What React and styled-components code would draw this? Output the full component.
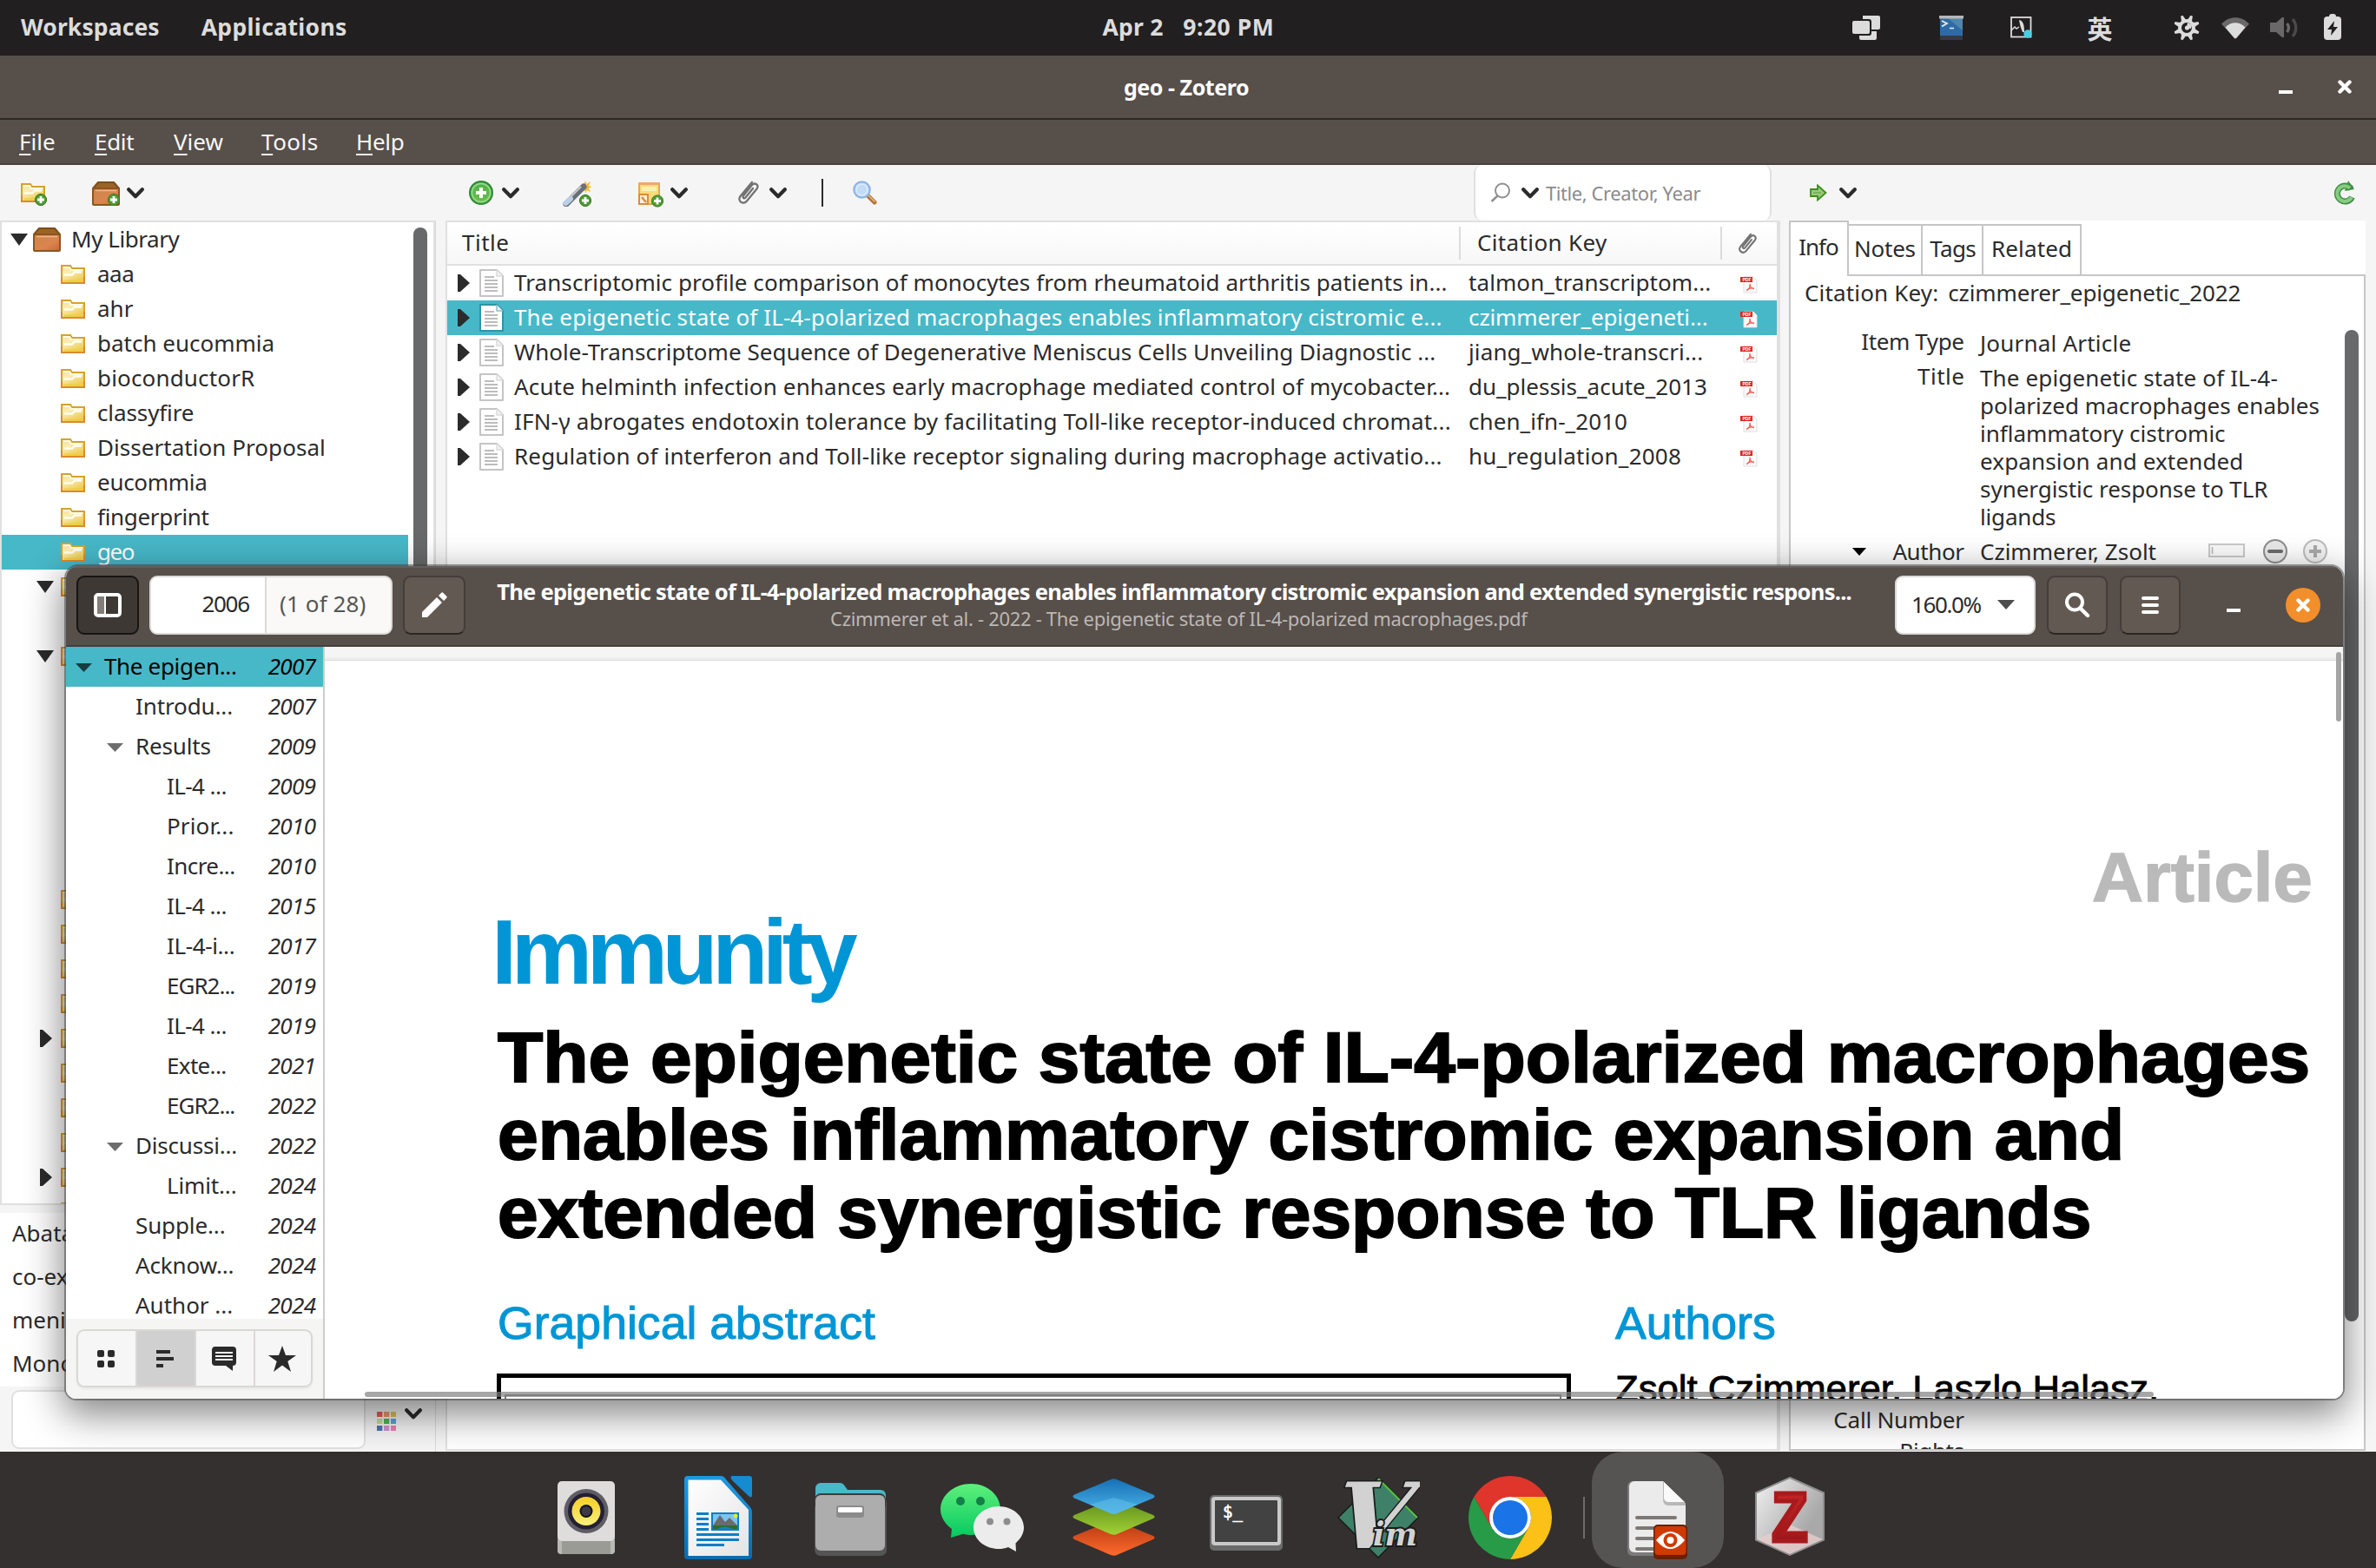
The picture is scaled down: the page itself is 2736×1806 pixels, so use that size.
import React, { useLayoutEffect, useRef, useState } from "react";
import styled, { createGlobalStyle, css } from "styled-components";

const Global = createGlobalStyle`
  *, *::before, *::after { box-sizing: border-box; }
  html, body { margin: 0; padding: 0; }
  body {
    width: 2736px; height: 1806px; overflow: hidden; background: #34302f;
    font-family: "Noto Sans", "Open Sans", "Noto Sans CJK SC", sans-serif;
    font-size: 26px; color: #2b2b2b;
  }
  svg { display: block; flex: none; }
`;

/* ---------- text that is set to a given measure ---------- */
const Tracked = styled.span`
  display: inline-block;
  white-space: nowrap;
  transform-origin: 0 50%;
`;

/* tracks its letters to the measure, or widens them when "stretch" is set */
function Fit({ w, stretch, children, className }) {
  const ref = useRef(null);
  const [style, setStyle] = useState({});
  useLayoutEffect(() => {
    const el = ref.current;
    if (stretch) {
      setStyle({ transform: `scaleX(${w / el.offsetWidth})` });
      return;
    }
    const ls = (w - el.offsetWidth) / (el.textContent.length - 1);
    setStyle({ letterSpacing: ls, marginRight: -ls });
  }, []);
  return (
    <Tracked ref={ref} className={className} style={style}>
      {children}
    </Tracked>
  );
}

/* ---------- desktop ---------- */
const Desktop = styled.div`
  position: relative;
  width: 2736px;
  height: 1806px;
  display: flex;
  flex-direction: column;
  overflow: hidden;
`;

const TopBar = styled.header`
  height: 64px;
  flex: none;
  background: #221f20;
  color: #dcdcdc;
  font-weight: 700;
  font-size: 26.5px;
  display: grid;
  grid-template-columns: 1fr auto 1fr;
  align-items: center;
  padding: 0 40px 0 24px;
`;
const TopLeft = styled.div`
  display: flex;
  gap: 48px;
  padding-bottom: 2px;
`;
const Clock = styled.div`
  display: flex;
  gap: 23px;
  padding-bottom: 2px;
  transform: translateX(8px);
`;
const Tray = styled.div`
  display: flex;
  justify-content: flex-end;
  align-items: center;
`;
const Slot = styled.div`
  display: flex;
  align-items: center;
  flex: none;
  margin-left: ${(p) => p.$ml || 0}px;
  padding-top: ${(p) => p.$pt || 0}px;
  padding-bottom: ${(p) => p.$pb || 0}px;
  width: ${(p) => (p.$w ? p.$w + "px" : "auto")};
`;
const InputMethod = styled.span`
  font: 700 29px/40px "Noto Sans CJK SC", sans-serif;
  width: 28px;
  display: flex;
  justify-content: center;
`;

const ZTitle = styled.div`
  height: 74px;
  flex: none;
  background: #574f4a;
  border-bottom: 2px solid #2b2827;
  color: #fff;
  font-weight: 700;
  font-size: 25px;
  display: flex;
  align-items: center;
  padding-left: 1294px;
`;
const WinControls = styled.div`
  display: flex;
  align-items: center;
  gap: 52px;
  margin-left: auto;
  padding-right: 28px;
`;
const MenuBar = styled.nav`
  height: 52px;
  flex: none;
  background: #574f4a;
  border-bottom: 2px solid #4b403e;
  color: #f7f7f7;
  display: flex;
  align-items: center;
  padding-left: 22px;
`;
const MenuItem = styled.div`
  width: ${(p) => p.$w}px;
  u { text-underline-offset: 4px; text-decoration-thickness: 2px; }
`;

const Toolbar = styled.div`
  height: 64px;
  flex: none;
  background: #f6f5f5;
  display: flex;
  align-items: center;
  padding: 0 24px;
`;
const SearchBox = styled.div`
  height: 64px;
  width: 343px;
  margin-left: ${(p) => p.$ml}px;
  flex: none;
  background: #fff;
  border: 2px solid #e1e0e0;
  border-width: 0 2px;
  border-radius: 9px;
  display: flex;
  align-items: center;
  padding-left: 17px;
  font-size: 22px;
  color: #8b8b8b;
`;
const Rule = styled.div`
  width: 2px;
  height: 32px;
  flex: none;
  background: #2b2b2b;
  margin-left: ${(p) => p.$ml}px;
`;

const Body = styled.div`
  height: 1418px;
  flex: none;
  background: #f6f5f5;
  display: flex;
`;

/* left column */
const LeftCol = styled.aside`
  width: 502px;
  flex: none;
  display: flex;
  flex-direction: column;
  border-right: 1px solid #d9d9d9;
`;
const TreeBox = styled.div`
  height: 1134px;
  background: #fff;
  border: 2px solid #e0e0e0;
  display: flex;
  overflow: hidden;
`;
const TreeRows = styled.div`
  width: 468px;
  flex: none;
`;
const TreeRow = styled.div`
  height: 40px;
  display: flex;
  align-items: center;
  padding-left: ${(p) => p.$pl || 68}px;
  ${(p) => p.$on && css`background: #47b8c8; color: #fff;`}
`;
const TreeLabel = styled.span`
  margin-left: ${(p) => p.$ml || 14}px;
  padding-bottom: 3px;
`;
const Scrollbar = styled.div`
  width: 16px;
  border-radius: 8px;
  background: #68696b;
  flex: none;
  height: ${(p) => p.$h}px;
  margin: ${(p) => p.$m};
`;
const TagPane = styled.div`
  margin-top: 9px;
  height: 200px;
  background: #fff;
  padding-left: 14px;
  overflow: hidden;
`;
const TagLine = styled.div`
  height: 50px;
  line-height: 47px;
`;
const TagFilter = styled.div`
  height: 75px;
  display: flex;
  padding: 4px 0 0 13px;
`;
const FilterInput = styled.div`
  width: 408px;
  height: 68px;
  border: 2px solid #e1e0e0;
  border-radius: 9px;
  background: #fff;
  flex: none;
`;

/* item list */
const ListPane = styled.main`
  margin-left: 11px;
  width: 1537px;
  height: 1417px;
  flex: none;
  background: #fff;
  border: 2px solid #e0e0e0;
  border-right: 4px solid #e0e0e0;
`;
const HeadRow = styled.div`
  height: 50px;
  background: linear-gradient(#fff, #f7f7f7);
  border-bottom: 2px solid #e0e0e0;
  display: flex;
  align-items: center;
  padding-left: 17px;
`;
const HeadCell = styled.div`
  width: ${(p) => p.$w}px;
  height: 38px;
  padding: 0 0 2px ${(p) => p.$pl || 0}px;
  border-left: ${(p) => (p.$bar ? "2px solid #dcdcdc" : "none")};
  display: flex;
  align-items: center;
`;
const ItemRow = styled.div`
  height: 40px;
  display: flex;
  align-items: center;
  padding-left: 12px;
  ${(p) => p.$on && css`background: #47b8c8; color: #fff;`}
`;
const ItemTitle = styled.div`
  width: 1099px;
  margin-left: 12px;
  padding-bottom: 2px;
`;
const ItemKey = styled.div`
  width: 313px;
  padding-bottom: 2px;
`;

/* right pane */
const RightPane = styled.section`
  margin-left: 10px;
  width: 664px;
  height: 1417px;
  flex: none;
  background: #fff;
  display: flex;
  flex-direction: column;
`;
const Tabs = styled.div`
  height: 64px;
  flex: none;
  display: flex;
  align-items: flex-end;
`;
const Tab = styled.div`
  width: ${(p) => p.$w}px;
  height: ${(p) => (p.$on ? 64 : 60)}px;
  border-top: 2px solid #c6c6c6;
  border-right: 2px solid #c6c6c6;
  border-left: ${(p) => (p.$on ? "2px solid #c6c6c6" : "none")};
  border-bottom: ${(p) => (p.$on ? "none" : "2px solid #c6c6c6")};
  display: flex;
  align-items: center;
  justify-content: center;
  padding: 0 0 ${(p) => (p.$on ? 6 : 4)}px 0;
  flex: none;
`;
const TabRest = styled.div`
  flex: 1;
  border-bottom: 2px solid #c6c6c6;
`;
const TabPanel = styled.div`
  flex: 1;
  min-height: 0;
  border: 2px solid #c6c6c6;
  border-top: none;
  overflow: hidden;
  padding-top: 1px;
`;
const CiteLine = styled.div`
  height: 56px;
  line-height: 36px;
  padding-left: 16px;
  display: flex;
  gap: 11px;
`;
const Columns = styled.div`
  display: flex;
`;
const Fields = styled.div`
  width: 638px;
  flex: none;
`;
const Field = styled.div`
  display: grid;
  grid-template-columns: 200px 1fr;
  column-gap: 18px;
  line-height: ${(p) => p.$lh || 40}px;
  ${(p) => p.$h && css`height: ${p.$h}px;`}
`;
const FieldName = styled.div`
  text-align: right;
  line-height: 36px;
  display: flex;
  align-items: center;
  justify-content: flex-end;
  height: 36px;
`;
const FieldValue = styled.div`
  display: flex;
  flex-direction: ${(p) => (p.$row ? "row" : "column")};
  align-items: flex-start;
`;
const Gap = styled.div`
  height: ${(p) => p.$h}px;
`;

/* ---------- document viewer window ---------- */
const Viewer = styled.div`
  position: absolute;
  left: 76px;
  top: 652px;
  width: 2622px;
  height: 959px;
  border-radius: 14px 14px 12px 12px;
  box-shadow: 0 0 0 2px rgba(60, 62, 60, 0.5), 0 14px 44px 4px rgba(0, 0, 0, 0.48);
`;
const Frame = styled.div`
  height: 100%;
  border-radius: inherit;
  overflow: hidden;
  background: #fff;
  display: flex;
  flex-direction: column;
`;
const HeaderBar = styled.div`
  height: 93px;
  flex: none;
  background: #574f4a;
  border-top: 2px solid #655e58;
  border-bottom: 2px solid #453e3a;
  display: flex;
  align-items: flex-start;
  padding: 9px 26px 0 12px;
`;
const HeaderButton = styled.div`
  width: ${(p) => p.$w || 70}px;
  height: 68px;
  margin-left: ${(p) => p.$ml || 0}px;
  border-radius: 9px;
  border: 2px solid ${(p) => (p.$on ? "#171513" : "#443d39")};
  border-bottom-color: ${(p) => (p.$on ? "#171513" : "#2a2623")};
  background: ${(p) => (p.$on ? "#3d3834" : "#625952")};
  display: flex;
  align-items: center;
  justify-content: center;
  flex: none;
`;
const PageEntry = styled.div`
  width: 280px;
  height: 68px;
  margin-left: 12px;
  background: #faf9f8;
  border: 2px solid #dcdad8;
  border-radius: 9px;
  display: flex;
  overflow: hidden;
  flex: none;
`;
const PageNumber = styled.div`
  width: 133px;
  background: #fff;
  border-right: 2px solid #dcdad8;
  display: flex;
  align-items: center;
  justify-content: flex-end;
  padding: 0 17px 4px 0;
`;
const PageCount = styled.div`
  display: flex;
  align-items: center;
  padding: 0 0 4px 15px;
  color: #575553;
`;
const TitleBlock = styled.div`
  width: 1561px;
  margin-left: 36px;
  display: flex;
  flex-direction: column;
  align-items: center;
  color: #fff;
  flex: none;
`;
const DocTitle = styled.div`
  font-weight: 700;
  font-size: 25.5px;
  line-height: 36px;
`;
const DocFile = styled.div`
  font-size: 22px;
  line-height: 27px;
  color: #bcb8b5;
  padding-left: 10px;
`;
const ZoomBox = styled.div`
  width: 162px;
  height: 68px;
  margin-left: 49px;
  border-radius: 9px;
  background: #fff;
  border: 2px solid #dcdad8;
  display: flex;
  align-items: center;
  padding: 0 0 2px 17px;
  gap: 18px;
  flex: none;
`;
const MinSlot = styled.div`
  height: 68px;
  display: flex;
  align-items: center;
  padding-top: 12px;
  margin-left: 53px;
`;
const CloseRound = styled.div`
  width: 40px;
  height: 40px;
  margin: 14px 0 0 52px;
  border-radius: 50%;
  background: #f28f2b;
  display: flex;
  align-items: center;
  justify-content: center;
`;
const ViewerBody = styled.div`
  flex: 1;
  min-height: 0;
  display: flex;
`;
const Sidebar = styled.div`
  width: 298px;
  flex: none;
  border-right: 2px solid #cfcdcb;
  display: flex;
  flex-direction: column;
`;
const Outline = styled.div`
  height: 774px;
  overflow: hidden;
  flex: none;
`;
const OutlineRow = styled.div`
  height: 46px;
  display: flex;
  align-items: center;
  padding: 0 8px 2px ${(p) => p.$pl}px;
  ${(p) => p.$on && css`background: #47b8c8; color: #000;`}
`;
const OutlineArrow = styled.div`
  width: 19px;
  margin: 4px 14px 0 0;
`;
const OutlinePage = styled.div`
  margin-left: auto;
  font-style: italic;
`;
const SideFooter = styled.div`
  flex: 1;
  background: #f5f5f4;
  padding: 12px 0 0 12px;
`;
const Segments = styled.div`
  width: 272px;
  height: 67px;
  border: 2px solid #dad8d7;
  border-radius: 9px;
  background: #f7f6f6;
  display: flex;
  overflow: hidden;
  box-shadow: 0 2px 3px rgba(0, 0, 0, 0.06);
`;
const Segment = styled.div`
  width: ${(p) => p.$w || 68}px;
  border-left: ${(p) => (p.$first ? "none" : "2px solid #dad8d7")};
  background: ${(p) => (p.$on ? "#d1d0d0" : "transparent")};
  display: flex;
  align-items: center;
  justify-content: center;
  padding-right: 2px;
`;
const PageArea = styled.div`
  flex: 1;
  min-width: 0;
  background: #fff;
  position: relative;
  overflow: hidden;
  font-family: "Liberation Sans", Arial, sans-serif;
  color: #000;
`;
const PageGap = styled.div`
  height: 16px;
  background: linear-gradient(#f5f5f5 70%, #ececec);
  border-bottom: 1px solid #d9d9d9;
`;
const Paper = styled.article`
  padding: 219px 0 0 199px;
  color: #000;
`;
const Kind = styled.div`
  font: 700 79px/62px "Liberation Sans", Arial, sans-serif;
  color: #bababa;
  -webkit-text-stroke: 1.4px #bababa;
  padding-left: 1836px;
`;
const Journal = styled.div`
  font: 700 105px/110px "Liberation Sans", Arial, sans-serif;
  color: #0096d6;
  margin-left: -7px;
`;
const PaperTitle = styled.h1`
  margin: 21px 0 0 0;
  font: 700 81.5px/89.4px "Liberation Sans", Arial, sans-serif;
  -webkit-text-stroke: 2px #000;
  display: flex;
  flex-direction: column;
  align-items: flex-start;
`;
const PaperCols = styled.div`
  margin-top: 53px;
  display: grid;
  grid-template-columns: 1287px 1fr;
`;
const SectionHead = styled.div`
  font: 400 51px/60px "Liberation Sans", Arial, sans-serif;
  color: #0096d6;
  -webkit-text-stroke: 1px #0096d6;
  padding-top: 1px;
`;
const AbstractFrame = styled.div`
  width: 1237px;
  height: 200px;
  margin: 27px 0 0 -1px;
  border: 5px solid #000;
  padding: 19px 6px 0 4px;
`;
const AbstractInner = styled.div`
  height: 100px;
  border: 2px solid #777;
`;
const AuthorLine = styled.div`
  margin-top: 21px;
  font: 400 42px/48px "Liberation Sans", Arial, sans-serif;
  -webkit-text-stroke: 0.8px #000;
`;
const VBar = styled.div`
  position: absolute;
  right: 2px;
  top: 6px;
  width: 6px;
  height: 80px;
  border-radius: 3px;
  background: #a4a4a4;
`;
const HBar = styled.div`
  position: absolute;
  left: 46px;
  bottom: 2px;
  width: 2060px;
  height: 6px;
  border-radius: 3px;
  background: rgba(128, 128, 128, 0.7);
`;

/* ---------- dock ---------- */
const Dock = styled.footer`
  height: 134px;
  flex: none;
  background: #34302f;
  display: flex;
  padding-left: 599px;
`;
const DockCell = styled.div`
  width: 152px;
  height: 134px;
  flex: none;
  display: flex;
  justify-content: center;
  padding-top: 28px;
  border-radius: 36px;
  background: ${(p) => (p.$on ? "#565453" : "transparent")};
`;
const DockRule = styled.div`
  width: 2px;
  height: 48px;
  margin: 52px 8px 0;
  background: #6f6b6a;
`;

/* ---------- small icons ---------- */
const Chevron = () => (
  <svg width="20" height="13" viewBox="0 0 20 13">
    <path d="M2.2 2.2 10 10.2 17.8 2.2" fill="none" stroke="#2b2b2b" strokeWidth="4.2" strokeLinecap="round" strokeLinejoin="round" />
  </svg>
);
const TriDown = ({ w = 20, h = 14, c = "#2b2b2b" }) => (
  <svg width={w} height={h} viewBox="0 0 20 14" preserveAspectRatio="none"><path d="M0 0h20L10 14z" fill={c} /></svg>
);
const TriRight = () => (
  <svg width="14" height="20" viewBox="0 0 14 20"><path d="M0 0 3 0 14 10 3 20 0 20z" fill="#2b2b2b" /></svg>
);
const MinDash = () => (
  <svg width="16" height="4" viewBox="0 0 16 4"><path d="M0 0h16v4H0z" fill="#fff" /></svg>
);
const CrossMark = () => (
  <svg width="16" height="16" viewBox="0 0 16 16">
    <path d="M2.5 2.5 13.5 13.5M13.5 2.5 2.5 13.5" stroke="#fff" strokeWidth="4.4" strokeLinecap="round" />
  </svg>
);
const Plus = ({ x, y }) => (
  <g>
    <circle cx={x} cy={y} r="6.6" fill="#4f9a35" stroke="#3a7a27" strokeWidth="1" />
    <path d={`M${x - 4} ${y}h8M${x} ${y - 4}v8`} stroke="#fff" strokeWidth="2.8" />
  </g>
);
const FolderShape = () => (
  <g>
    <path d="M1 1h10l2 3h14v17H1z" fill="url(#fold)" stroke="#d7a22c" strokeWidth="2" />
    <path d="M1 14v7h26v-7" fill="none" stroke="#d98a30" strokeWidth="2" />
    <path d="M3 3h7l2 3h13" fill="none" stroke="#fffbe6" strokeWidth="2" />
    <path d="M4 11.500h9l3-3h8" fill="none" stroke="#fffdf0" strokeWidth="2.400" />
    <path d="M4 18.500h20" stroke="#f0cf3c" strokeWidth="2" />
  </g>
);
const Folder = () => (
  <svg width="28" height="22" viewBox="0 0 28 22">
    <defs>
      <linearGradient id="fold" x1="0" y1="0" x2="0.6" y2="1">
        <stop offset="0" stopColor="#f6dd92" /><stop offset="0.4" stopColor="#fbedb4" /><stop offset="1" stopColor="#eccb4c" />
      </linearGradient>
    </defs>
    <FolderShape />
  </svg>
);
const NewCollection = () => (
  <svg width="32" height="30" viewBox="0 0 32 30"><g transform="translate(0 3)"><FolderShape /></g><Plus x={23} y={22} /></svg>
);
const Box = ({ plus }) => (
  <svg width="32" height="28" viewBox="0 0 32 28">
    <defs>
      <linearGradient id="boxg" x1="0" y1="0" x2="1" y2="1">
        <stop offset="0" stopColor="#c9864a" /><stop offset="0.6" stopColor="#dc8450" /><stop offset="1" stopColor="#c46a34" />
      </linearGradient>
    </defs>
    <path d="M7 1h18l6 7H1z" fill="#9a6427" stroke="#7d4e1b" strokeWidth="2" strokeLinejoin="round" />
    <rect x="1" y="8" width="30" height="19" rx="1" fill="url(#boxg)" stroke="#8d5520" strokeWidth="2" />
    <path d="M4 10.500h24" stroke="#f0b488" strokeWidth="1.500" />
    {plus && <Plus x={25} y={21} />}
  </svg>
);
const AddItem = () => (
  <svg width="28" height="28" viewBox="0 0 28 28">
    <defs>
      <linearGradient id="addg" x1="0" y1="0" x2="0" y2="1">
        <stop offset="0" stopColor="#4db34a" /><stop offset="1" stopColor="#6cc04f" />
      </linearGradient>
    </defs>
    <circle cx="14" cy="14" r="13" fill="url(#addg)" stroke="#2f8a3a" strokeWidth="2" />
    <circle cx="14" cy="14" r="10.600" fill="none" stroke="#9ddb8c" strokeWidth="1.500" />
    <path d="M14 8v12M8 14h12" stroke="#fff" strokeWidth="4" />
  </svg>
);
const Wand = () => (
  <svg width="34" height="30" viewBox="0 0 34 30">
    <path d="M26 0l1.500 4 5-3-3 5 4 1-4 2 3 4-5-2-1 3-2-4-5-4 5-1z" fill="#f6b62d" />
    <path d="M27 4l1 2-2 1z" fill="#fff3b0" />
    <path d="M4 27 24 7" stroke="#6a7078" strokeWidth="7" strokeLinecap="round" />
    <path d="M3.500 26 9 21" stroke="#b9cfe4" strokeWidth="6" strokeLinecap="round" />
    <path d="M8 20 21 7" stroke="#c7ccd2" strokeWidth="2" />
    <Plus x={26} y={23} />
  </svg>
);
const NewNote = () => (
  <svg width="30" height="30" viewBox="0 0 30 30">
    <path d="M1 2h23v24H1z" fill="#f9dc7c" stroke="#eaa552" strokeWidth="2" />
    <path d="M0 1h25v3H0z" fill="#f0a868" />
    <path d="M4 6h17v5H4z" fill="#fcefb4" />
    <path d="M1 15h10v11H1z" fill="#fdf1dc" stroke="#e08a36" strokeWidth="2" />
    <path d="M4 18l5 6" stroke="#e08a36" strokeWidth="2.500" />
    <Plus x={22} y={22.5} />
  </svg>
);
const Clip = ({ w = 26, h = 28 }) => (
  <svg width={w} height={h} viewBox="0 0 26 28">
    <path d="M18 9 9.500 19.500c-1.500 2-4 0-2.500-2L17 5c3-3.500 8.500 0 5.500 4.500L11 23.500C7 28.500-.5 23.500 3.500 18L17 1.800" fill="none" stroke="#737373" strokeWidth="2.300" strokeLinecap="round" strokeLinejoin="round" />
  </svg>
);
const Magnifier = () => (
  <svg width="28" height="28" viewBox="0 0 28 28">
    <path d="M17 17 25 25" stroke="#b4743a" strokeWidth="5" strokeLinecap="round" />
    <path d="M18 17 25 24" stroke="#e8b57a" strokeWidth="1.600" strokeLinecap="round" />
    <circle cx="10.500" cy="10.500" r="9.200" fill="#c2dcf8" stroke="#8db4e2" strokeWidth="2.200" />
    <circle cx="10.500" cy="10.500" r="6.400" fill="none" stroke="#dcecfc" strokeWidth="1.400" />
  </svg>
);
const LoupeOutline = () => (
  <svg width="24" height="24" viewBox="0 0 24 24">
    <circle cx="14" cy="9.500" r="8" fill="none" stroke="#8f8f8f" strokeWidth="2" />
    <path d="M8.500 15.500 1.500 22" stroke="#8f8f8f" strokeWidth="2.400" />
  </svg>
);
const GreenArrow = () => (
  <svg width="20" height="20" viewBox="0 0 20 20">
    <path d="M1 6h8V1.500L18.500 10 9 18.500V14H1z" fill="#9aca7c" stroke="#3c8f1d" strokeWidth="1.800" />
    <path d="M4 10h9" stroke="#7ab35d" strokeWidth="2" />
  </svg>
);
const Sync = () => (
  <svg width="26" height="28" viewBox="0 0 26 28">
    <path d="M20.500 9.500A9 9 0 1 0 21.500 19" fill="none" stroke="#3f8d44" strokeWidth="7" />
    <path d="M17 0 24 10 13 12z" fill="#3f8d44" />
    <path d="M19 8.500A8.800 8.800 0 1 0 21 19" fill="none" stroke="#86cc82" strokeWidth="4" />
  </svg>
);
const DocIcon = ({ on }) => (
  <svg width="28" height="32" viewBox="0 0 28 32">
    <path d="M1 1h19l7 7v23H1z" fill="#fff" stroke={on ? "#2f93a3" : "#c4c4c4"} strokeWidth="2" strokeLinejoin="round" />
    <path d="M20 1v7h7" fill="#f2f2f2" stroke={on ? "#8bbfc8" : "#dcdcdc"} strokeWidth="1.500" />
    <path d="M6 9h11M6 13h15M6 17h15M6 21h15M6 25h15" stroke="#bcbcbc" strokeWidth="1.800" />
  </svg>
);
const PdfIcon = () => (
  <svg width="20" height="20" viewBox="0 0 20 20">
    <path d="M4 1h11l4 4v14H4z" fill="#fbfbfb" stroke="#dedede" strokeWidth="1" />
    <path d="M0 1h14v6H0z" fill="#e02412" />
    <text x="2.500" y="6" fontSize="5" fontWeight="700" fill="#fff" fontFamily="Liberation Sans">PDF</text>
    <path d="M7 17c2.500-1 4.500-4.500 4-7.500M11 9c0 3 2 5.500 5 5.500M7.500 16c2-2 5-2.500 8-2" fill="none" stroke="#ef5b50" strokeWidth="1.300" />
  </svg>
);
const AuthorTools = () => (
  <svg width="140" height="34" viewBox="0 0 140 34">
    <rect x="1" y="10" width="40" height="14" fill="#fafafa" stroke="#c9c9c9" strokeWidth="2" />
    <path d="M4.500 13v8" stroke="#b5b5b5" strokeWidth="1.500" />
    <circle cx="77" cy="18" r="13" fill="#e9e9e9" stroke="#8e8e8e" strokeWidth="2" />
    <path d="M70 18h14" stroke="#6a6a6a" strokeWidth="4" strokeLinecap="round" />
    <circle cx="123" cy="18" r="13" fill="#f2f2f2" stroke="#bcbcbc" strokeWidth="2" />
    <path d="M116 18h14M123 11v14" stroke="#a9a9a9" strokeWidth="4" />
  </svg>
);
const ColorGrid = () => {
  const c = ["#e85c5c", "#ef9a6a", "#dfc35a", "#c8dd9c", "#45bb5a", "#5aa7e0", "#4f74b0", "#d193d6", "#f77bb0"];
  return (
    <svg width="22" height="22" viewBox="0 0 22 22">
      {c.map((f, i) => <rect key={f} x={(i % 3) * 8} y={Math.floor(i / 3) * 8} width="6.300" height="6" fill={f} />)}
    </svg>
  );
};

/* tray */
const WindowsIcon = () => (
  <svg width="32" height="28" viewBox="0 0 32 28">
    <path d="M12 0h18a2 2 0 0 1 2 2v12a2 2 0 0 1-2 2h-8V7a3 3 0 0 0-3-3h-7z" fill="#dcdcdc" />
    <rect x="0" y="6" width="20" height="15" rx="2" fill="#dcdcdc" />
    <path d="M8 23h12a3 3 0 0 0 2-3v-2h6v8a2 2 0 0 1-2 2H10a2 2 0 0 1-2-2z" fill="#dcdcdc" />
  </svg>
);
const ShellIcon = () => (
  <svg width="28" height="28" viewBox="0 0 28 28">
    <path d="M1 3h26v20H1z" fill="#2e6ba6" />
    <path d="M27 3v14L10 3z" fill="#5b93b5" opacity="0.700" />
    <path d="M0 0h28v3.500H0z" fill="#b6b6b6" />
    <path d="M1 23h26v5H1z" fill="#353a41" />
    <path d="M3 6l6 3-6 3.500M12 14.500h5" fill="none" stroke="#e8f0f8" strokeWidth="1.700" />
  </svg>
);
const ShotIcon = () => (
  <svg width="25" height="26" viewBox="0 0 25 26">
    <rect x="1" y="1" width="22.500" height="22.500" fill="#221f20" stroke="#dcdcdc" strokeWidth="1.800" />
    <path d="M10 4c5 1 6 6 6 14h-2c-1-3-2-5-3-9z" fill="#dcdcdc" />
    <path d="M1 16l4-4 2 2 3-2" fill="none" stroke="#dcdcdc" strokeWidth="1.500" />
    <circle cx="20" cy="20" r="4.700" fill="#46cfe4" />
  </svg>
);
const Gear = () => (
  <svg width="30" height="30" viewBox="0 0 30 30">
    {[22.5, 67.5, 112.5, 157.5, 202.5, 247.5, 292.5, 337.5].map((a) => (
      <path key={a} d="M12.200 7 13.700 0h2.600L17.800 7z" fill="#dcdcdc" transform={`rotate(${a} 15 15)`} />
    ))}
    <circle cx="15" cy="15" r="8" fill="#221f20" stroke="#dcdcdc" strokeWidth="4" />
    <path d="M15 15 16 9 21 12 20 16z" fill="#dcdcdc" />
    <circle cx="15.500" cy="15" r="2.600" fill="#dcdcdc" />
  </svg>
);
const Wifi = () => (
  <svg width="32" height="25" viewBox="0 0 32 25">
    <path d="M0 7.500C9-2.300 23-2.300 32 7.500L16 25z" fill="#6a6868" />
    <path d="M4.500 11.500C11 4.500 21 4.500 27.500 11.500L18 23c-1.500 1.600-2.500 1.600-4 0z" fill="#dcdcdc" />
  </svg>
);
const Volume = () => (
  <svg width="32" height="26" viewBox="0 0 32 26">
    <path d="M0 7h7l7-6h2v23h-2l-7-6H0z" fill="#6a6868" />
    <path d="M19.500 8c2.500 3 2.500 7 0 10" fill="none" stroke="#6a6868" strokeWidth="3.500" />
    <path d="M26 3c5 6 5 14 0 20" fill="none" stroke="#4b4949" strokeWidth="3.500" />
  </svg>
);
const Battery = () => (
  <svg width="20" height="30" viewBox="0 0 20 30">
    <path d="M6 3a3 3 0 0 1 3-3h2a3 3 0 0 1 3 3h2a4 4 0 0 1 4 4v19a4 4 0 0 1-4 4H4a4 4 0 0 1-4-4V7a4 4 0 0 1 4-4z" fill="#dcdcdc" />
    <path d="M12 8 4 18h5l-1 7 8-10h-5z" fill="#221f20" />
  </svg>
);

/* viewer icons */
const PanelIcon = () => (
  <svg width="32" height="28" viewBox="0 0 32 28">
    <rect x="2" y="2" width="28" height="24" rx="3" fill="none" stroke="#fff" strokeWidth="4" />
    <path d="M4 4h8v20H4z" fill="#837d79" /><path d="M12 4h2v20h-2z" fill="#fff" />
  </svg>
);
const Pencil = () => (
  <svg width="30" height="30" viewBox="0 0 30 30">
    <path d="M1 23 18 6l6 6L7 29H1z" fill="#fff" /><path d="M20 4l3-3c1-1 1.600-1 2.500 0L29 4.500c1 1 1 1.600 0 2.500l-3 3z" fill="#fff" />
  </svg>
);
const Loupe = () => (
  <svg width="30" height="30" viewBox="0 0 30 30">
    <circle cx="12" cy="11.500" r="9" fill="none" stroke="#fff" strokeWidth="4" />
    <path d="M20 20 27 27" stroke="#fff" strokeWidth="4.400" strokeLinecap="round" />
  </svg>
);
const Burger = () => (
  <svg width="20" height="20" viewBox="0 0 20 20"><path d="M2 2h16M2 10h16M2 18h16" stroke="#fff" strokeWidth="4" strokeLinecap="round" /></svg>
);
const GridIcon = () => (
  <svg width="20" height="20" viewBox="0 0 20 20">
    {[[0, 0], [12, 0], [0, 12], [12, 12]].map(([x, y]) => <rect key={`${x}-${y}`} x={x} y={y} width="8" height="8" rx="2" fill="#2b2b2b" />)}
  </svg>
);
const OutlineIcon = () => (
  <svg width="20" height="20" viewBox="0 0 20 20"><path d="M0 0h16v4H0zM0 8h20v4H0zM0 16h8v4H0z" fill="#2b2b2b" /></svg>
);
const NoteIcon = () => (
  <svg width="28" height="28" viewBox="0 0 28 28">
    <path d="M4 0h20a4 4 0 0 1 4 4v14a4 4 0 0 1-4 4v6l-8-6H4a4 4 0 0 1-4-4V4a4 4 0 0 1 4-4z" fill="#2b2b2b" />
    <path d="M4 7h20M4 11h20M4 15h20" stroke="#f7f6f6" strokeWidth="2" />
  </svg>
);
const Star = () => (
  <svg width="32" height="30" viewBox="0 0 32 30">
    <path d="M16 0 20 11H32L22.300 18 26 30 16 22.500 6 30 9.700 18 0 11H12z" fill="#2b2b2b" />
  </svg>
);

/* dock icons: all drawn in a 96px square */
const Art = ({ children }) => <svg width="96" height="96" viewBox="0 0 96 96">{children}</svg>;
const Speaker = () => (
  <Art>
    <defs><linearGradient id="sp" x1="0" y1="0" x2="0" y2="1"><stop offset="0" stopColor="#f5cf2a" /><stop offset="1" stopColor="#f9f07a" /></linearGradient></defs>
    <rect x="15" y="10" width="66" height="80" rx="5" fill="#9b9b96" />
    <path d="M15 74h5v16h-1a4 4 0 0 1-4-4zM76 74h5v12a4 4 0 0 1-4 4h-1z" fill="#b9b9b5" />
    <path d="M15 11a5 5 0 0 1 5-5h56a5 5 0 0 1 5 5v59a5 5 0 0 1-5 5H20a5 5 0 0 1-5-5z" fill="#dedddb" />
    <circle cx="48" cy="40.500" r="25.500" fill="#5e5c64" />
    <circle cx="48" cy="40.500" r="21" fill="#241f31" />
    <circle cx="48" cy="40.500" r="16.500" fill="url(#sp)" />
    <circle cx="48" cy="40.500" r="7.500" fill="#111" /><circle cx="48" cy="40.500" r="5.500" fill="#3d3846" />
  </Art>
);
const Writer = () => (
  <Art>
    <defs>
      <linearGradient id="wr" x1="0" y1="0" x2="0" y2="1"><stop offset="0" stopColor="#1d99e3" /><stop offset="1" stopColor="#0a6cab" /></linearGradient>
      <linearGradient id="wp" x1="0" y1="0" x2="1" y2="1"><stop offset="0" stopColor="#fff" /><stop offset="1" stopColor="#e4e4e4" /></linearGradient>
    </defs>
    <g transform="translate(1 0)">
      <path d="M12 0h38c3 0 4 1 6 4l27 31c2 2 3 4 3 7v50a4 4 0 0 1-4 4H12a4 4 0 0 1-4-4V4a4 4 0 0 1 4-4z" fill="url(#wr)" />
      <path d="M12.500 4.500H50L82 39v53H12.500z" fill="url(#wp)" />
      <path d="M64 0h19a3 3 0 0 1 3 3v19c0 3-2 3-4 1L63 5c-2-3-2-5 1-5z" fill="#168bd0" />
      <path d="M22 42h14v3H22zM22 48h14v3H22zM22 54h14v3H22zM22 60h14v3H22zM22 66h49v3H22zM22 72h49v3H22zM22 78h32v3H22zM39 42h32v21H39z" fill="#0d7fc4" />
      <path d="M41 44h28v17H41z" fill="#7cc4ee" />
      <path d="M41 57l8-12 6 8 5-5 9 9z" fill="#6b6b6b" /><path d="M41 57h28v4H41z" fill="#2d6e2d" /><path d="M46 61q8-5 18 0z" fill="#1b7fc0" />
      <circle cx="67" cy="46" r="2.500" fill="#d9ee3b" />
    </g>
  </Art>
);
const Files = () => (
  <Art>
    <g transform="translate(1 0)">
      <path d="M7 14a6 6 0 0 1 6-6h22c3 0 4 1 6 4l3 4h38a6 6 0 0 1 6 6v14H7z" fill="#48b9c7" />
      <rect x="6" y="24" width="83" height="68" rx="7" fill="#555" />
      <rect x="6" y="20" width="82" height="20" rx="7" fill="#3f3b3a" />
      <rect x="7" y="22" width="80" height="64" rx="6" fill="#adadad" />
      <rect x="31" y="34" width="32" height="14" rx="3" fill="#8b8b8b" />
      <rect x="33" y="36" width="28" height="6" rx="1.500" fill="#fff" />
    </g>
  </Art>
);
const WeChat = () => (
  <Art>
    <defs><linearGradient id="we" x1="0" y1="0" x2="0" y2="1"><stop offset="0" stopColor="#5ef07c" /><stop offset="1" stopColor="#05c960" /></linearGradient></defs>
    <path d="M35 9c19 0 34 13 34 29.500S54 68 35 68c-3 0-6-.4-9-1.200L12 71l1-10C5 55 0 47 0 38.500 0 22 16 9 35 9z" fill="url(#we)" />
    <circle cx="23" cy="29" r="5" fill="#128048" /><circle cx="46" cy="29" r="5" fill="#128048" />
    <path d="M67 35c16 0 29 11 29 24.500 0 7-4 13-9.500 18L87 87l-9-5c-4 1.500-7 2-11 2-16 0-29-11-29-24.500S51 35 67 35z" fill="#ececec" />
    <circle cx="57" cy="52.500" r="4" fill="#8d8d8d" /><circle cx="76.500" cy="52.500" r="4" fill="#8d8d8d" />
  </Art>
);
const Stack = () => (
  <Art>
    <defs>
      <linearGradient id="sb" x1="0" y1="0" x2="0" y2="1"><stop offset="0" stopColor="#1670b5" /><stop offset="1" stopColor="#4db5ea" /></linearGradient>
      <linearGradient id="sg" x1="0" y1="0" x2="0" y2="1"><stop offset="0" stopColor="#5f8c1c" /><stop offset="1" stopColor="#a2d236" /></linearGradient>
      <linearGradient id="so" x1="0" y1="0" x2="0" y2="1"><stop offset="0" stopColor="#b33812" /><stop offset="1" stopColor="#ff6a2c" /></linearGradient>
    </defs>
    <path d="M44 52 2 69c-2 1-2 3 0 4l42 18c3 1 5 1 7 0l42-18c2-1 2-3 0-4L51 52z" fill="url(#so)" />
    <path d="M44 28 2 45c-2 1-2 3 0 4l42 18c3 1 5 1 7 0l42-18c2-1 2-3 0-4L51 28z" fill="url(#sg)" />
    <path d="M44 4 2 21.500c-2 1-2 3 0 4L44 43c3 1 5 1 7 0l42-17.500c2-1 2-3 0-4L51 4c-3-1-5-1-7 0z" fill="url(#sb)" />
    <path d="M20 33 47.500 25 75 33 51 43.200q-3.500 1-7 0z" fill="#62c0ea" opacity="0.550" />
  </Art>
);
const Terminal = () => (
  <Art>
    <rect x="6" y="24" width="84" height="62" rx="5" fill="#6a6a6a" />
    <rect x="6" y="22" width="84" height="20" rx="5" fill="#6a6a6a" />
    <rect x="8" y="24" width="80" height="56" rx="4" fill="#c9c9c9" />
    <rect x="12" y="28" width="72" height="48" rx="1" fill="#424242" />
    <text x="21" y="48" fontSize="19" fill="#fff" stroke="#fff" strokeWidth="0.600" fontFamily="DejaVu Sans Mono">$_</text>
  </Art>
);
const Vim = () => (
  <Art>
    <path d="M48 2 94 48 48 94 2 48z" fill="#3f8069" stroke="#1a1a1a" strokeWidth="1.500" />
    <path d="M48 3 93 48" stroke="#56c43c" strokeWidth="2" />
    <text transform="translate(-15 83) skewX(-20)" x="0" y="0" fontSize="105" fontWeight="700" fontFamily="DejaVu Serif" fill="#d2d2d2" stroke="#1c1c1c" strokeWidth="3" paintOrder="stroke" textLength="90" lengthAdjust="spacingAndGlyphs">V</text>
    <text x="42" y="80" fontSize="38" fontStyle="italic" fontWeight="700" fontFamily="DejaVu Serif" fill="#d2d2d2" stroke="#1c1c1c" strokeWidth="4" paintOrder="stroke" textLength="51" lengthAdjust="spacingAndGlyphs">im</text>
  </Art>
);
const Chrome = () => (
  <Art>
    <path d="M48 0a48 48 0 0 1 41.570 24H48a24 24 0 0 0-20.780 12L6.430 24A48 48 0 0 1 48 0z" fill="#df352b" />
    <path d="M89.570 24A48 48 0 0 1 48 96l20.780-36A24 24 0 0 0 48 24z" fill="#fbc117" />
    <path d="M6.430 24 27.220 60A24 24 0 0 0 68.780 60L48 96A48 48 0 0 1 6.430 24z" fill="#279b48" />
    <path d="M6.430 24 27.220 60 40 40 30 24z" fill="#df352b" />
    <circle cx="48" cy="48" r="24" fill="#fff" /><circle cx="48" cy="48" r="20" fill="#1b73e8" />
  </Art>
);
const DocViewer = () => (
  <Art>
    <path d="M13 12a6 6 0 0 1 6-6h35l26 26v54a6 6 0 0 1-6 6H19a6 6 0 0 1-6-6z" fill="#7b7b7b" />
    <path d="M15 12a6 6 0 0 1 6-6h33l26 26v50a6 6 0 0 1-6 6H21a6 6 0 0 1-6-6z" fill="#ebebeb" />
    <path d="M54 6v22a6 6 0 0 0 6 6h20v-2z" fill="#b8b8b8" /><path d="M55 7 79 30H60a5 5 0 0 1-5-5z" fill="#fafafa" />
    <path d="M24 48h44M24 60h44M24 72h30M24 84h30" stroke="#7c7876" strokeWidth="4" strokeLinecap="round" />
    <rect x="43" y="56" width="39" height="40" rx="5" fill="#6a1f02" />
    <rect x="44.500" y="58" width="36" height="33" rx="4" fill="#cf3a02" />
    <path d="M46 74q16.500-20 33 0-16.500 20-33 0z" fill="#fff" />
    <circle cx="62.500" cy="74" r="8" fill="#cf3a02" /><circle cx="62.500" cy="74" r="4" fill="#fff" />
  </Art>
);
const ZoteroArt = () => (
  <Art>
    <defs>
      <linearGradient id="zh" x1="0" y1="0" x2="0.800" y2="0.600"><stop offset="0" stopColor="#f2f2f2" /><stop offset="1" stopColor="#a9a9a9" /></linearGradient>
      <linearGradient id="zf" x1="0" y1="0" x2="0" y2="1"><stop offset="0" stopColor="#d1282a" /><stop offset="1" stopColor="#8c1416" /></linearGradient>
    </defs>
    <path d="M48 2 87 19.500v54L48 91 9 73.500v-54z" fill="url(#zh)" stroke="#8f8f8f" strokeWidth="2" />
    <path d="M10 73 48 56 86 73 48 90z" fill="#e7cccc" opacity="0.800" />
    <text x="48" y="75" textAnchor="middle" fontSize="80" fontWeight="700" fontFamily="Liberation Sans" fill="url(#zf)" stroke="#a81a1c" strokeWidth="5" textLength="41" lengthAdjust="spacingAndGlyphs">Z</text>
  </Art>
);

/* ---------- data ---------- */
const menus = [["F", "ile", 42, 87], ["E", "dit", 46, 91], ["V", "iew", 57, 101], ["T", "ools", 65, 109], ["H", "elp", 56, 80]];
const collections = [
  ["aaa", 43], ["ahr", 41], ["batch eucommia", 204], ["bioconductorR", 181], ["classyfire", 111],
  ["Dissertation Proposal", 263], ["eucommia", 127], ["fingerprint", 129], ["geo", 43, true],
];
/* d: open branch, r: closed branch, f: leaf, -: nested rows */
const moreRows = "d-d------ffffrfffrf".split("");
const items = [
  ["Transcriptomic profile comparison of monocytes from rheumatoid arthritis patients in...", 1075, "talmon_transcriptom...", 279],
  ["The epigenetic state of IL-4-polarized macrophages enables inflammatory cistromic e...", 1068, "czimmerer_epigeneti...", 276, true],
  ["Whole-Transcriptome Sequence of Degenerative Meniscus Cells Unveiling Diagnostic ...", 1061, "jiang_whole-transcri...", 270],
  ["Acute helminth infection enhances early macrophage mediated control of mycobacter...", 1078, "du_plessis_acute_2013", 275],
  ["IFN-γ abrogates endotoxin tolerance by facilitating Toll-like receptor-induced chromat...", 1079, "chen_ifn-_2010", 183],
  ["Regulation of interferon and Toll-like receptor signaling during macrophage activatio...", 1069, "hu_regulation_2008", 245],
];
const titleLines = [
  ["The epigenetic state of IL-4-", 343], ["polarized macrophages enables", 391], ["inflammatory cistromic", 283],
  ["expansion and extended", 303], ["synergistic response to TLR", 332], ["ligands", 88],
];
const outline = [
  [0, "The epigen...", 153, "2007", true], [1, "Introdu...", 112, "2007"], [1, "Results", 87, "2009", true],
  [2, "IL-4 ...", 69, "2009"], [2, "Prior...", 77, "2010"], [2, "Incre...", 79, "2010"], [2, "IL-4 ...", 69, "2015"],
  [2, "IL-4-i...", 79, "2017"], [2, "EGR2...", 79, "2019"], [2, "IL-4 ...", 69, "2019"], [2, "Exte...", 69, "2021"],
  [2, "EGR2...", 79, "2022"], [1, "Discussi...", 117, "2022", true], [2, "Limit...", 81, "2024"],
  [1, "Supple...", 104, "2024"], [1, "Acknow...", 114, "2024"], [1, "Author ...", 112, "2024"],
];

export default function App() {
  return (
    <>
      <Global />
      <Desktop>
        <TopBar>
          <TopLeft><Fit w={160}>Workspaces</Fit><Fit w={168}>Applications</Fit></TopLeft>
          <Clock><Fit w={70}>Apr 2</Fit><Fit w={104}>9:20 PM</Fit></Clock>
          <Tray>
            <Slot><WindowsIcon /></Slot>
            <Slot $ml={68}><ShellIcon /></Slot>
            <Slot $ml={54}><ShotIcon /></Slot>
            <Slot $ml={64}><InputMethod>英</InputMethod></Slot>
            <Slot $ml={71}><Gear /></Slot>
            <Slot $ml={25}><Wifi /></Slot>
            <Slot $ml={24}><Volume /></Slot>
            <Slot $ml={30} $pb={2}><Battery /></Slot>
          </Tray>
        </TopBar>

        <ZTitle>
          <Fit w={145}>geo - Zotero</Fit>
          <WinControls><Slot $pt={12}><MinDash /></Slot><CrossMark /></WinControls>
        </ZTitle>
        <MenuBar>
          {menus.map(([u, rest, w, box]) => (
            <MenuItem key={u} $w={box}><Fit w={w}><u>{u}</u>{rest}</Fit></MenuItem>
          ))}
        </MenuBar>

        <Toolbar>
          <Slot $w={82} $pt={2}><NewCollection /></Slot>
          <Slot $w={40} $pt={2}><Box plus /></Slot>
          <Slot $w={394}><Chevron /></Slot>
          <Slot $w={38}><AddItem /></Slot>
          <Slot $w={70}><Chevron /></Slot>
          <Slot $w={87} $pt={2}><Wand /></Slot>
          <Slot $w={37} $pt={4}><NewNote /></Slot>
          <Slot $w={77}><Chevron /></Slot>
          <Slot $w={37}><Clip /></Slot>
          <Slot $w={20}><Chevron /></Slot>
          <Rule $ml={40} />
          <Slot $ml={34}><Magnifier /></Slot>
          <SearchBox $ml={687}>
            <Slot $w={36}><LoupeOutline /></Slot>
            <Slot $w={28}><Chevron /></Slot>
            <Fit w={178}>Title, Creator, Year</Fit>
          </SearchBox>
          <Slot $ml={44} $w={34}><GreenArrow /></Slot>
          <Slot $w={569}><Chevron /></Slot>
          <Sync />
        </Toolbar>

        <Body>
          <LeftCol>
            <TreeBox>
              <TreeRows>
                <TreeRow $pl={10}>
                  <Slot $w={26}><TriDown /></Slot><Box />
                  <TreeLabel $ml={12}><Fit w={125}>My Library</Fit></TreeLabel>
                </TreeRow>
                {collections.map(([name, w, on]) => (
                  <TreeRow key={name} $on={on}><Folder /><TreeLabel><Fit w={w}>{name}</Fit></TreeLabel></TreeRow>
                ))}
                {moreRows.map((k, i) => (
                  <TreeRow key={i} $pl={40}>
                    <Slot $w={28}>{k === "d" && <TriDown />}{k === "r" && <Slot $ml={4}><TriRight /></Slot>}</Slot>
                    {k !== "-" && <Folder />}
                  </TreeRow>
                ))}
              </TreeRows>
              <Scrollbar $h={900} $m="6px 0 0 6px" />
            </TreeBox>
            <TagPane>
              <TagLine>Abata</TagLine><TagLine>co-ex</TagLine><TagLine>meni</TagLine><TagLine>Mono</TagLine>
            </TagPane>
            <TagFilter>
              <FilterInput />
              <Slot $ml={13} $w={32}><ColorGrid /></Slot>
              <Slot $pb={16}><Chevron /></Slot>
            </TagFilter>
          </LeftCol>

          <ListPane>
            <HeadRow>
              <HeadCell $w={1148}><Fit w={54}>Title</Fit></HeadCell>
              <HeadCell $w={301} $pl={19} $bar><Fit w={149}>Citation Key</Fit></HeadCell>
              <HeadCell $w={64} $pl={18} $bar><Slot $pt={3}><Clip w={23} h={25} /></Slot></HeadCell>
            </HeadRow>
            {items.map(([t, tw, k, kw, on]) => (
              <ItemRow key={k} $on={on}>
                <Slot $w={25}><TriRight /></Slot>
                <DocIcon on={on} />
                <ItemTitle><Fit w={tw}>{t}</Fit></ItemTitle>
                <ItemKey><Fit w={kw}>{k}</Fit></ItemKey>
                <Slot $pt={3}><PdfIcon /></Slot>
              </ItemRow>
            ))}
          </ListPane>

          <RightPane>
            <Tabs>
              <Tab $w={69} $on><Fit w={47}>Info</Fit></Tab>
              <Tab $w={85}><Fit w={71}>Notes</Fit></Tab>
              <Tab $w={70}><Slot $ml={2}><Fit w={53}>Tags</Fit></Slot></Tab>
              <Tab $w={113}><Fit w={93}>Related</Fit></Tab>
              <TabRest />
            </Tabs>
            <TabPanel>
              <CiteLine><Fit w={154}>Citation Key:</Fit><Fit w={337}>czimmerer_epigenetic_2022</Fit></CiteLine>
              <Columns>
                <Fields>
                  <Field>
                    <FieldName><Fit w={119}>Item Type</Fit></FieldName>
                    <FieldValue><Fit w={174}>Journal Article</Fit></FieldValue>
                  </Field>
                  <Field $lh={32} $h={202}>
                    <FieldName><Gap $h={38} /><Fit w={54}>Title</Fit></FieldName>
                    <FieldValue><Gap $h={4} />{titleLines.map(([t, w]) => <Fit key={t} w={w}>{t}</Fit>)}</FieldValue>
                  </Field>
                  <Field $lh={36} $h={1000}>
                    <FieldName>
                      <TriDown w={16} h={9} c="#000" />
                      <Slot $ml={30}><Fit w={83}>Author</Fit></Slot>
                    </FieldName>
                    <FieldValue $row>
                      <Slot $w={263}><Fit w={203}>Czimmerer, Zsolt</Fit></Slot>
                      <AuthorTools />
                    </FieldValue>
                  </Field>
                  <Field><FieldName><Fit w={151}>Call Number</Fit></FieldName></Field>
                  <Field><FieldName><Fit w={75}>Rights</Fit></FieldName></Field>
                </Fields>
                <Scrollbar $h={1142} $m="5px 0 0 0" />
              </Columns>
            </TabPanel>
          </RightPane>
        </Body>

        <Dock>
          <DockCell><Speaker /></DockCell>
          <DockCell><Writer /></DockCell>
          <DockCell><Files /></DockCell>
          <DockCell><WeChat /></DockCell>
          <DockCell><Stack /></DockCell>
          <DockCell><Terminal /></DockCell>
          <DockCell><Vim /></DockCell>
          <DockCell><Chrome /></DockCell>
          <DockRule />
          <DockCell $on><DocViewer /></DockCell>
          <DockCell><ZoteroArt /></DockCell>
        </Dock>

        <Viewer>
          <Frame>
            <HeaderBar>
              <HeaderButton $w={72} $on><PanelIcon /></HeaderButton>
              <PageEntry>
                <PageNumber><Fit w={56}>2006</Fit></PageNumber>
                <PageCount><Fit w={99}>(1 of 28)</Fit></PageCount>
              </PageEntry>
              <HeaderButton $w={72} $ml={12}><Pencil /></HeaderButton>
              <TitleBlock>
                <DocTitle>
                  <Fit w={1561}>The epigenetic state of IL-4-polarized macrophages enables inflammatory cistromic expansion and extended synergistic respons...</Fit>
                </DocTitle>
                <DocFile><Fit w={803}>Czimmerer et al. - 2022 - The epigenetic state of IL-4-polarized macrophages.pdf</Fit></DocFile>
              </TitleBlock>
              <ZoomBox><Fit w={81}>160.0%</Fit><TriDown w={20} h={11} c="#4d4d4d" /></ZoomBox>
              <HeaderButton $ml={13}><Loupe /></HeaderButton>
              <HeaderButton $ml={14}><Burger /></HeaderButton>
              <MinSlot><MinDash /></MinSlot>
              <CloseRound><CrossMark /></CloseRound>
            </HeaderBar>
            <ViewerBody>
              <Sidebar>
                <Outline>
                  {outline.map(([lv, t, w, page, open], i) => (
                    <OutlineRow key={i} $on={i === 0} $pl={open ? 11 + lv * 36 : 44 + lv * 36}>
                      {open && <OutlineArrow><TriDown w={19} h={10} c={i === 0 ? "#173c42" : "#6d6d6d"} /></OutlineArrow>}
                      <Fit w={w}>{t}</Fit>
                      <OutlinePage><Fit w={55}>{page}</Fit></OutlinePage>
                    </OutlineRow>
                  ))}
                </Outline>
                <SideFooter>
                  <Segments>
                    <Segment $first $w={66}><GridIcon /></Segment>
                    <Segment $on><OutlineIcon /></Segment>
                    <Segment><NoteIcon /></Segment>
                    <Segment $w={66}><Star /></Segment>
                  </Segments>
                </SideFooter>
              </Sidebar>
              <PageArea>
                <PageGap />
                <Paper>
                  <Kind><Fit stretch w={254}>Article</Fit></Kind>
                  <Journal><Fit w={422}>Immunity</Fit></Journal>
                  <PaperTitle>
                    <Fit stretch w={2087}>The epigenetic state of IL-4-polarized macrophages</Fit>
                    <Fit stretch w={1873}>enables inflammatory cistromic expansion and</Fit>
                    <Fit stretch w={1835}>extended synergistic response to TLR ligands</Fit>
                  </PaperTitle>
                  <PaperCols>
                    <div>
                      <SectionHead><Fit stretch w={435}>Graphical abstract</Fit></SectionHead>
                      <AbstractFrame><AbstractInner /></AbstractFrame>
                    </div>
                    <div>
                      <SectionHead><Fit stretch w={185}>Authors</Fit></SectionHead>
                      <AuthorLine><Fit stretch w={626}>Zsolt Czimmerer, Laszlo Halasz,</Fit></AuthorLine>
                    </div>
                  </PaperCols>
                </Paper>
                <VBar />
                <HBar />
              </PageArea>
            </ViewerBody>
          </Frame>
        </Viewer>
      </Desktop>
    </>
  );
}
